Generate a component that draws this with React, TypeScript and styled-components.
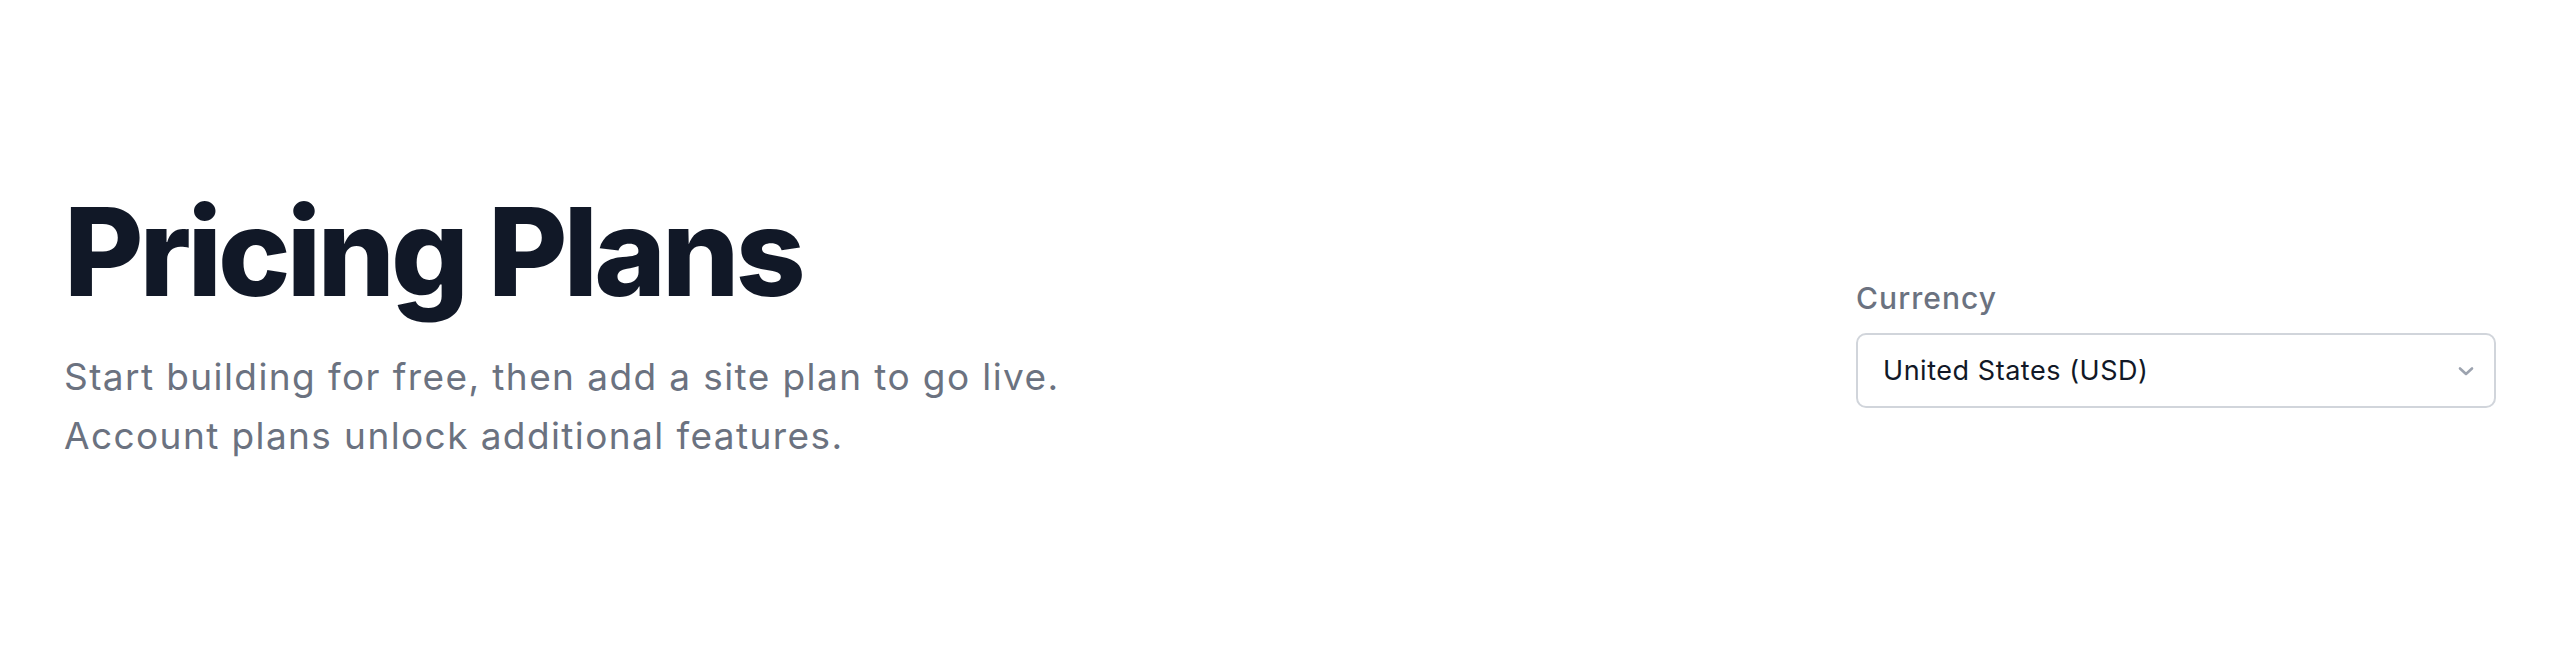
import React from "react";
import styled, { createGlobalStyle } from "styled-components";

const GlobalStyle = createGlobalStyle`
  html, body { margin: 0; padding: 0; background: #ffffff; }
  body { font-family: Inter, "Noto Sans", sans-serif; -webkit-font-smoothing: antialiased; }
  * { box-sizing: border-box; }
`;

const Page = styled.div`
  height: 656px;
  display: flex;
  align-items: center;
  justify-content: space-between;
  padding: 0 64px;
`;

const Intro = styled.div`
  display: flex;
  flex-direction: column;
  gap: 34px;
`;

const Title = styled.h1`
  margin: 0;
  font-size: 122px;
  line-height: 1;
  font-weight: 800;
  letter-spacing: -0.032em;
  color: #111827;
`;

const Lead = styled.p`
  margin: 0;
  font-size: 37px;
  line-height: 59px;
  font-weight: 400;
  letter-spacing: 0.038em;
  color: #6b7280;
`;

const Field = styled.div`
  display: flex;
  flex-direction: column;
  gap: 17px;
  width: 640px;
  margin-top: 32px;
`;

const Label = styled.label`
  font-size: 30px;
  line-height: 36px;
  font-weight: 500;
  letter-spacing: 0.035em;
  color: #6b7280;
`;

const SelectBox = styled.div`
  height: 75px;
  display: flex;
  align-items: center;
  justify-content: space-between;
  padding: 0 18px 0 25px;
  border: 2px solid #d1d5db;
  border-radius: 10px;
  background: #ffffff;
  font-size: 27px;
  letter-spacing: 0.02em;
  color: #111827;
`;

const Chevron = styled.svg`
  width: 20px;
  height: 20px;
  color: #9ca3af;
`;

export default function App() {
  return (
    <>
      <GlobalStyle />
      <Page>
        <Intro>
          <Title>Pricing Plans</Title>
          <Lead>
            Start building for free, then add a site plan to go live.
            <br />
            Account plans unlock additional features.
          </Lead>
        </Intro>
        <Field>
          <Label>Currency</Label>
          <SelectBox>
            <span>United States (USD)</span>
            <Chevron viewBox="0 0 20 20" fill="none">
              <polyline
                points="4,7.5 10,13 16,7.5"
                stroke="currentColor"
                strokeWidth="2.6"
                strokeLinecap="round"
                strokeLinejoin="round"
              />
            </Chevron>
          </SelectBox>
        </Field>
      </Page>
    </>
  );
}
